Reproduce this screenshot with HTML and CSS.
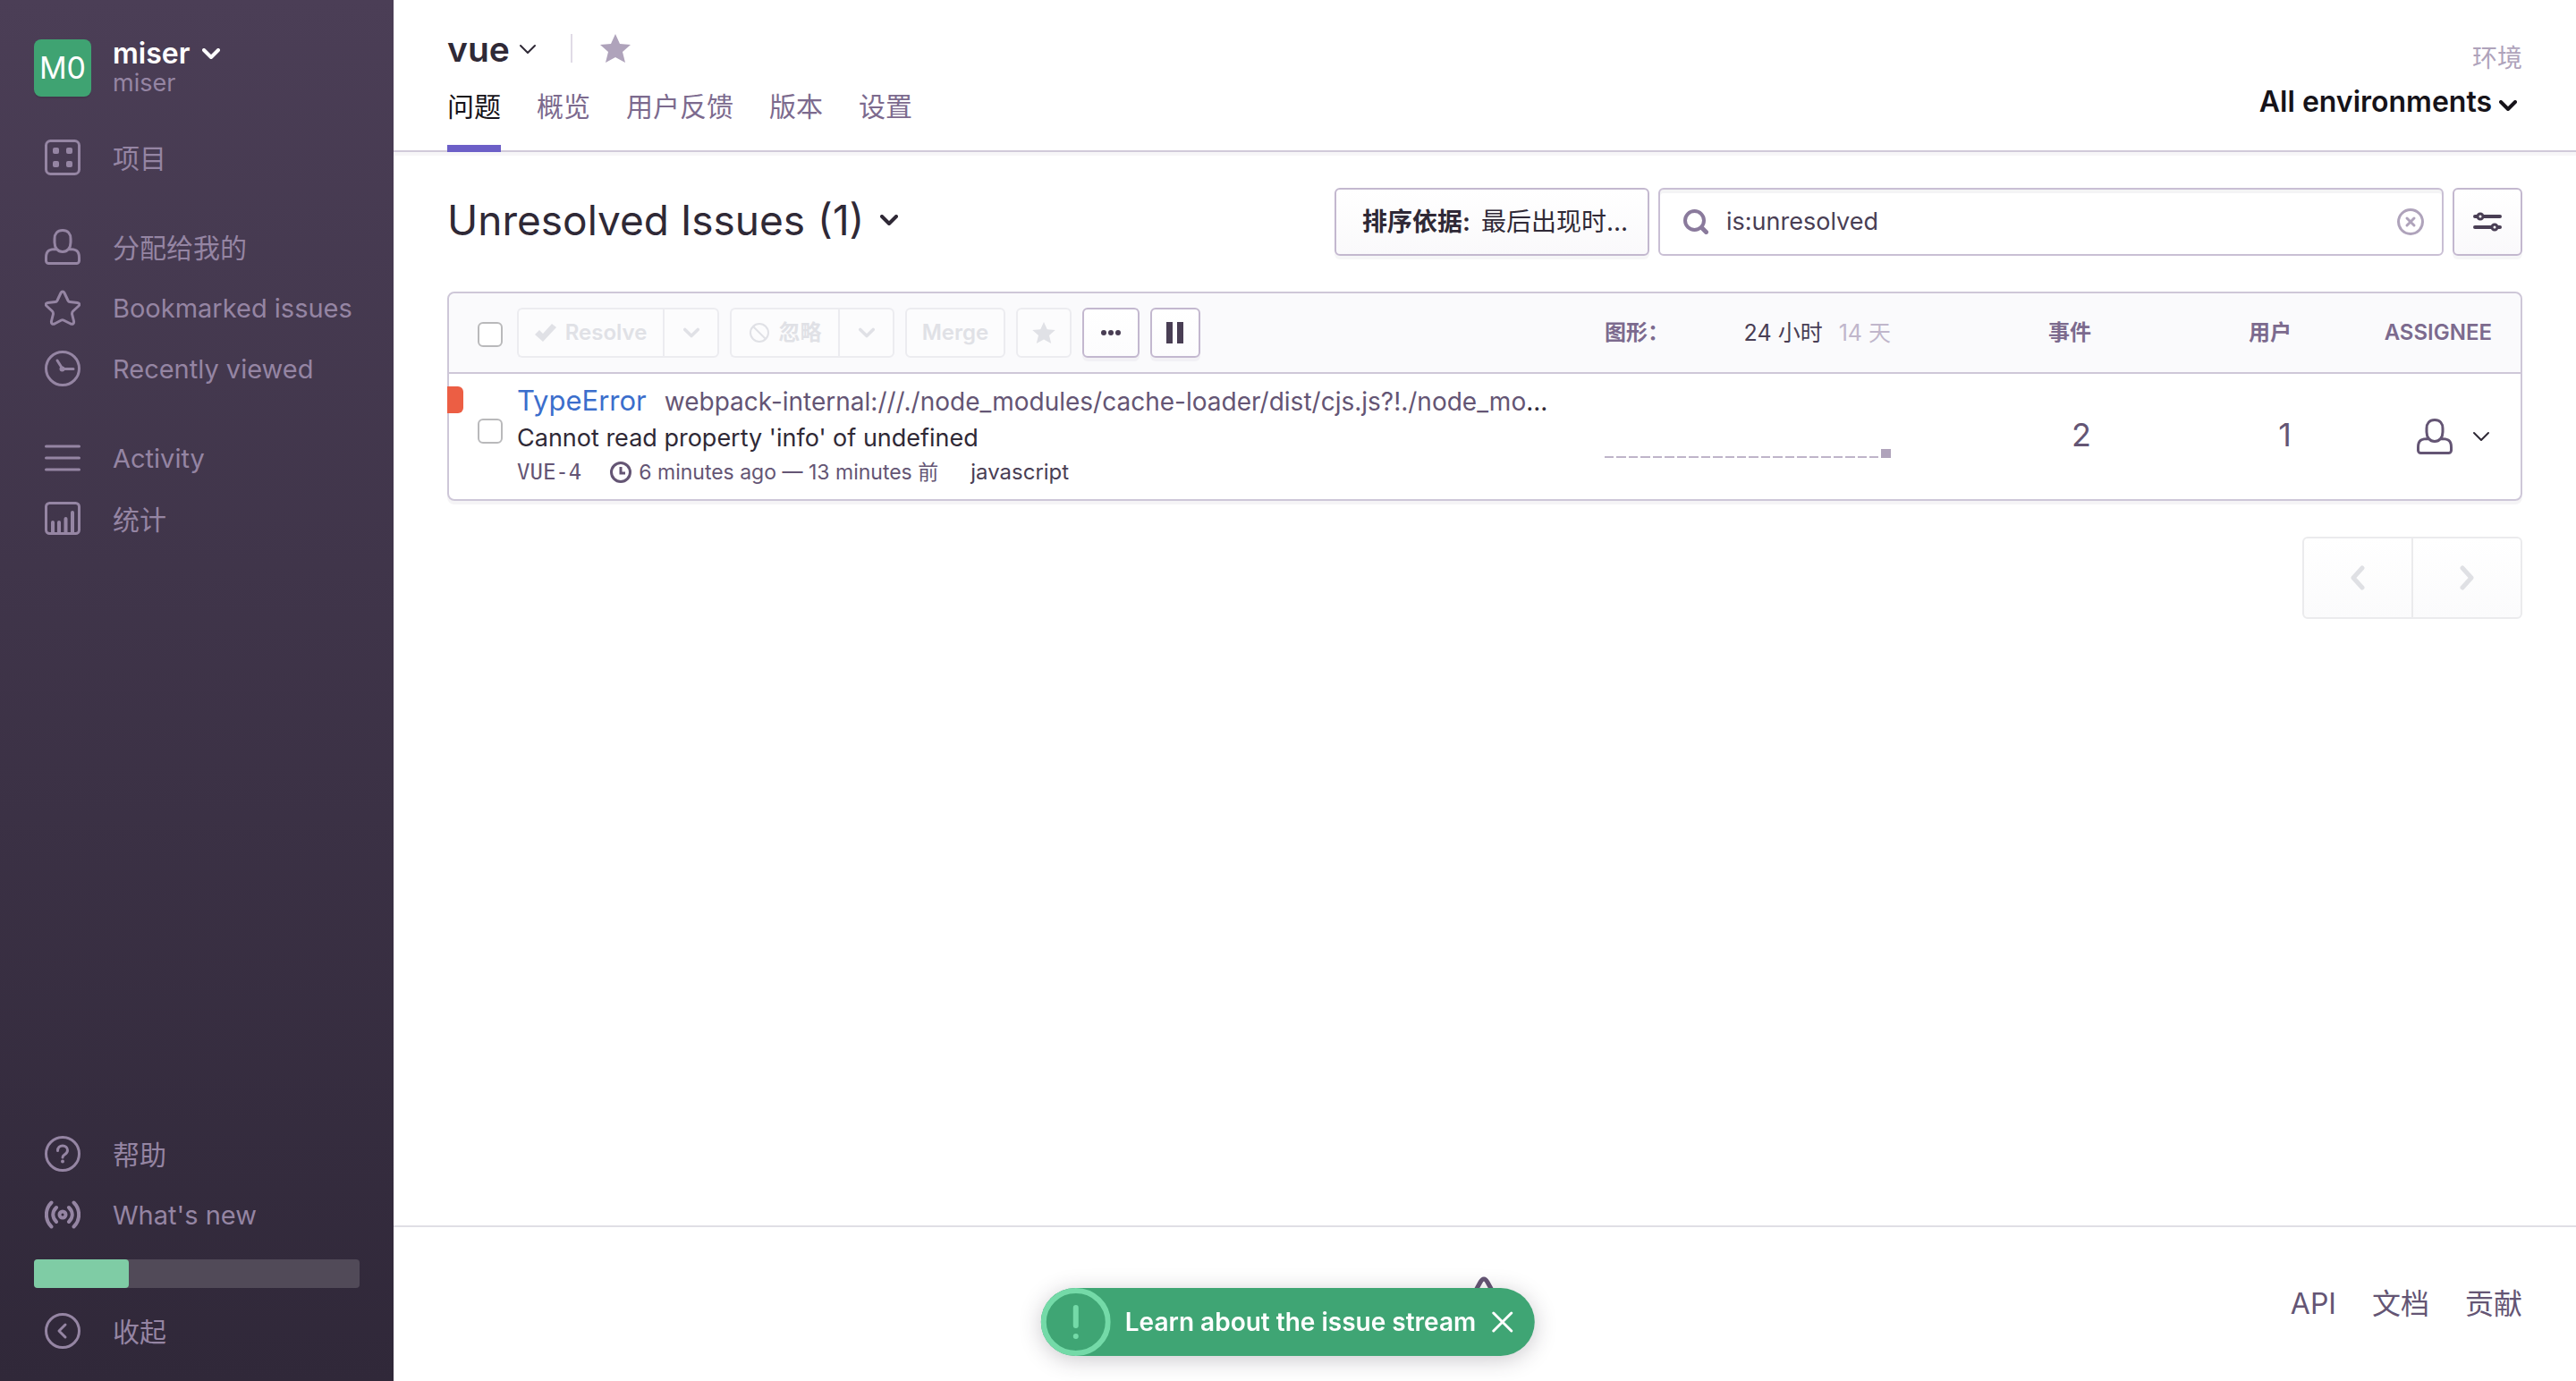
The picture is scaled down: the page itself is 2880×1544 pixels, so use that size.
FILE: index.html
```html
<!DOCTYPE html>
<html lang="zh-CN">
<head>
<meta charset="utf-8">
<title>vue - Unresolved Issues</title>
<link rel="stylesheet" href="styles.css">
</head>
<body>
<svg class="sprite" aria-hidden="true">
  <symbol id="chevron" viewBox="0 0 20 12"><path d="M2 2l8 8 8-8" fill="none" stroke="currentColor" stroke-linecap="round" stroke-linejoin="round"/></symbol>
  <symbol id="user" viewBox="0 0 40 40"><path d="M14 22.500C5 22.500 1.500 24 1.500 32v3.500a3 3 0 0 0 3 3h31a3 3 0 0 0 3-3V32c0-8-3.500-9.500-12.500-9.500M20 1.500c-6 0-9 4-9 9.500v4c0 6 3.500 10.500 9 10.500s9-4.500 9-10.500v-4c0-5.500-3-9.500-9-9.500z" fill="none" stroke="currentColor" stroke-width="3" stroke-linejoin="round"/></symbol>
  <symbol id="star-solid" viewBox="0 0 34 32"><path d="M17 0l5 11 12 1-9 8 3 12-11-6-11 6 3-12-9-8 12-1z" fill="currentColor"/></symbol>
</svg>
<div class="app">
  <aside class="sidebar">
    <button class="org" type="button">
      <span class="avatar">M0</span>
      <span class="org-text">
        <span class="org-name">miser <svg class="org-caret"><use href="#chevron"/></svg></span>
        <span class="org-sub">miser</span>
      </span>
    </button>
    <nav class="nav">
      <ul class="nav-group">
        <li><a class="zh" href="#projects"><svg viewBox="0 0 40 40"><rect x="1.500" y="1.500" width="37" height="37" rx="5" fill="none" stroke="currentColor" stroke-width="3"/><g fill="currentColor"><rect x="9" y="9" width="7" height="7" rx="2"/><rect x="24" y="9" width="7" height="7" rx="2"/><rect x="9" y="24" width="7" height="7" rx="2"/><rect x="24" y="24" width="7" height="7" rx="2"/></g></svg><span>项目</span></a></li>
      </ul>
      <ul class="nav-group">
        <li><a class="zh" href="#assigned"><svg viewBox="0 0 40 40"><use href="#user"/></svg><span>分配给我的</span></a></li>
        <li><a href="#bookmarks"><svg viewBox="0 0 40 40"><path d="M18 3.500c1-2 3-2 4 0l4 8.500c.500 1 1 1.500 2 1.500l8.500 1c2.500.500 3 2 1.500 3.500L31.500 24c-1 1-1 2-1 3l2 8c.500 2.500-1 4-3.500 3L21 34c-1-.500-1.500-.500-2.500 0L11 38c-2.500 1-4-.500-3.500-3l2-8c0-1 0-2-1-3L2 18c-1.500-1.500-1-3 1.500-3.500l8.500-1c1 0 1.500-.500 2-1.500z" fill="none" stroke="currentColor" stroke-width="3" stroke-linejoin="round"/></svg><span>Bookmarked issues</span></a></li>
        <li><a href="#recent"><svg viewBox="0 0 40 40"><circle cx="20" cy="20" r="18.500" fill="none" stroke="currentColor" stroke-width="3"/><path d="M14 11l6 9.500h12" fill="none" stroke="currentColor" stroke-width="3" stroke-linecap="round"/><circle cx="19.500" cy="20.500" r="3" fill="currentColor"/></svg><span>Recently viewed</span></a></li>
      </ul>
      <ul class="nav-group">
        <li><a href="#activity"><svg viewBox="0 0 40 40"><path d="M1.500 7h37M1.500 20h37M1.500 33h37" fill="none" stroke="currentColor" stroke-width="3" stroke-linecap="round"/></svg><span>Activity</span></a></li>
        <li><a class="zh" href="#stats"><svg viewBox="0 0 40 40"><rect x="1.500" y="2.500" width="37" height="34" rx="4" fill="none" stroke="currentColor" stroke-width="3"/><path d="M9 35V24M16 35V24M23.500 35V20M31 35V13" fill="none" stroke="currentColor" stroke-width="4" stroke-linecap="round"/></svg><span>统计</span></a></li>
      </ul>
    </nav>
    <div class="sidebar-bottom">
      <ul class="nav-group">
        <li><a class="zh" href="#help"><svg viewBox="0 0 40 40"><circle cx="20" cy="20" r="18.500" fill="none" stroke="currentColor" stroke-width="3"/><path d="M14.500 16.500c0-3.500 2.500-5.500 5.500-5.500s5.500 2 5.500 5-2 4-3.500 5-2 1.500-2 3" fill="none" stroke="currentColor" stroke-width="3" stroke-linecap="round"/><circle cx="20" cy="28.500" r="2" fill="currentColor"/></svg><span>帮助</span></a></li>
        <li><a href="#whats-new"><svg viewBox="0 0 40 40"><path d="M7.500 6.500C0 14 0 26 7.500 33.500M32.500 6.500C40 14 40 26 32.500 33.500M13 12c-5 5-5 11 0 16M27 12c5 5 5 11 0 16" fill="none" stroke="currentColor" stroke-width="4" stroke-linecap="round"/><circle cx="20" cy="20" r="3.500" fill="none" stroke="currentColor" stroke-width="4"/></svg><span>What's new</span></a></li>
      </ul>
      <div class="progress"><div class="progress-fill"></div></div>
      <ul class="nav-group">
        <li><a class="zh" href="#collapse"><svg viewBox="0 0 40 40"><circle cx="20" cy="20" r="18.500" fill="none" stroke="currentColor" stroke-width="3"/><path d="M23 13l-7 7 7 7" fill="none" stroke="currentColor" stroke-width="3" stroke-linecap="round" stroke-linejoin="round"/></svg><span>收起</span></a></li>
      </ul>
    </div>
  </aside>

  <div class="content">
    <header class="page-header">
      <div class="project">
        <div class="project-title">
          <button class="project-name" type="button">vue <svg class="caret-thin"><use href="#chevron"/></svg></button>
          <button class="bookmark" type="button" aria-label="Bookmark"><svg><use href="#star-solid"/></svg></button>
        </div>
        <nav class="tabs">
          <a class="active" href="#issues">问题</a>
          <a href="#overview">概览</a>
          <a href="#feedback">用户反馈</a>
          <a href="#releases">版本</a>
          <a href="#settings">设置</a>
        </nav>
      </div>
      <div class="environment">
        <span class="environment-label">环境</span>
        <button type="button">All environments<svg><use href="#chevron"/></svg></button>
      </div>
    </header>

    <main class="main">
      <div class="filters">
        <h1 class="title">Unresolved Issues <span>(1)</span><svg><use href="#chevron"/></svg></h1>
        <button class="btn sort" type="button"><strong>排序依据:</strong><span>最后出现时...</span></button>
        <div class="search">
          <svg class="search-icon" viewBox="0 0 28 28"><circle cx="12.500" cy="12.500" r="10.500" fill="none" stroke="currentColor" stroke-width="4"/><path d="M20.500 20.500l5 5" stroke="currentColor" stroke-width="5" stroke-linecap="round"/></svg>
          <input type="text" value="is:unresolved" aria-label="Search">
          <button class="clear" type="button" aria-label="Clear"><svg viewBox="0 0 30 30"><circle cx="15" cy="15" r="13.500" fill="none" stroke="currentColor" stroke-width="3"/><path d="M11 11l8 8M19 11l-8 8" stroke="currentColor" stroke-width="3" stroke-linecap="round"/></svg></button>
        </div>
        <button class="btn tune" type="button" aria-label="Filters"><svg viewBox="0 0 32 22"><path d="M2 5h28M2 17h28" stroke="currentColor" stroke-width="4" stroke-linecap="round"/><circle cx="8" cy="5" r="3" fill="#fff" stroke="currentColor" stroke-width="3"/><circle cx="24" cy="17" r="3" fill="#fff" stroke="currentColor" stroke-width="3"/></svg></button>
      </div>

      <div class="panel">
        <table class="issues">
          <colgroup><col class="c-check"><col><col class="c-graph"><col class="c-count"><col class="c-count"><col class="c-assignee"></colgroup>
          <thead>
            <tr>
              <th class="check"><input type="checkbox" aria-label="Select all"></th>
              <th class="summary">
                <div class="actions">
                  <div class="group">
                    <button class="small resolve" type="button" disabled><svg class="i-check" viewBox="0 0 24 20"><path d="M0 12l5-5 4 4L19 0l5 4L9 20z" fill="currentColor"/></svg>Resolve</button>
                    <button class="small drop" type="button" disabled aria-label="Resolve options"><svg class="i-drop"><use href="#chevron"/></svg></button>
                  </div>
                  <div class="group">
                    <button class="small ignore" type="button" disabled><svg class="i-ban" viewBox="0 0 24 24"><circle cx="12" cy="12" r="10" fill="none" stroke="currentColor" stroke-width="2"/><path d="M5 5l14 14" stroke="currentColor" stroke-width="2"/></svg>忽略</button>
                    <button class="small drop" type="button" disabled aria-label="Ignore options"><svg class="i-drop"><use href="#chevron"/></svg></button>
                  </div>
                  <button class="small merge" type="button" disabled>Merge</button>
                  <button class="small fav" type="button" disabled aria-label="Bookmark"><svg class="i-star"><use href="#star-solid"/></svg></button>
                  <button class="small more" type="button" aria-label="More"><svg class="i-more" viewBox="0 0 24 8"><g fill="currentColor"><circle cx="4" cy="4" r="3"/><circle cx="12" cy="4" r="3"/><circle cx="20" cy="4" r="3"/></g></svg></button>
                  <button class="small pause" type="button" aria-label="Pause"><svg class="i-pause" viewBox="0 0 20 24"><path d="M0 0h7v24H0zM12 0h7v24h-7z" fill="currentColor"/></svg></button>
                </div>
              </th>
              <th class="label"><div class="graph-head"><span>图形：</span><span class="ranges"><a class="on" href="#24h">24 小时</a><a href="#14d">14 天</a></span></div></th>
              <th class="label num">事件</th>
              <th class="label num">用户</th>
              <th class="label num">ASSIGNEE</th>
            </tr>
          </thead>
          <tbody>
            <tr>
              <td class="check"><span class="level"></span><input type="checkbox" aria-label="Select issue"></td>
              <td class="summary">
                <div class="issue-title"><a href="#issue">TypeError</a><span>webpack-internal:///./node_modules/cache-loader/dist/cjs.js?!./node_mo</span>...</div>
                <div class="issue-message">Cannot read property 'info' of undefined</div>
                <div class="issue-meta"><span class="short-id">VUE-4</span><span class="time"><svg viewBox="0 0 24 24"><circle cx="12" cy="12" r="10.500" fill="none" stroke="currentColor" stroke-width="3"/><path d="M12 6v7h5" fill="none" stroke="currentColor" stroke-width="3"/></svg>6 minutes ago — 13 minutes 前</span><a href="#logger">javascript</a></div>
              </td>
              <td><div class="bars"><i></i><i></i><i></i><i></i><i></i><i></i><i></i><i></i><i></i><i></i><i></i><i></i><i></i><i></i><i></i><i></i><i></i><i></i><i></i><i></i><i></i><i></i><i></i><i class="hit"></i></div></td>
              <td class="num">2</td>
              <td class="num">1</td>
              <td><button class="assign" type="button" aria-label="Assign"><svg class="assign-user"><use href="#user"/></svg><svg class="caret-thin"><use href="#chevron"/></svg></button></td>
            </tr>
          </tbody>
        </table>
      </div>

      <div class="pagination">
        <button type="button" disabled aria-label="Previous"><svg viewBox="0 0 16 28"><path d="M13 3L3 14l10 11" fill="none" stroke="currentColor" stroke-width="5" stroke-linecap="round" stroke-linejoin="round"/></svg></button>
        <button type="button" disabled aria-label="Next"><svg viewBox="0 0 16 28"><path d="M3 3l10 11L3 25" fill="none" stroke="currentColor" stroke-width="5" stroke-linecap="round" stroke-linejoin="round"/></svg></button>
      </div>
    </main>

    <footer class="footer">
      <svg class="logo" viewBox="0 0 60 62"><path d="M5 52c-3 0-3-2-2-4L26 6.500q4-7 8 0L57 48c1 2 1 4-2 4H42C42 38 34 28 22 22M13 38c5 3 8 7 9 14H5" fill="none" stroke="currentColor" stroke-width="5" stroke-linejoin="round"/></svg>
      <nav><a href="#api">API</a><a href="#docs">文档</a><a href="#contribute">贡献</a></nav>
    </footer>
  </div>
</div>

<div class="guide">
  <svg class="guide-cue" viewBox="0 0 78 76"><ellipse cx="39" cy="38" rx="36" ry="35" fill="none" stroke="currentColor" stroke-width="6"/><path d="M39 22v20" stroke="currentColor" stroke-width="6" stroke-linecap="round"/><circle cx="39" cy="54" r="3" fill="currentColor"/></svg>
  <span>Learn about the issue stream</span>
  <button type="button" aria-label="Close"><svg viewBox="0 0 24 24"><path d="M2 2l20 20M22 2L2 22" stroke="currentColor" stroke-width="3" stroke-linecap="round"/></svg></button>
</div>
</body>
</html>
```
FILE: styles.css
```css
* { box-sizing: border-box; }
body {
  margin: 0;
  background: #fff;
  color: #2f2936;
  font: 28px/40px Inter, "Noto Sans CJK SC", sans-serif;
}
a { color: inherit; text-decoration: none; }
button {
  margin: 0;
  padding: 0;
  border: 0;
  background: none;
  color: inherit;
  font: inherit;
  text-align: left;
}
ul { list-style: none; margin: 0; padding: 0; }
svg { display: block; flex: none; }
.sprite { position: absolute; width: 0; height: 0; }

.app { display: flex; min-height: 100vh; }

/* Sidebar */
.sidebar {
  display: flex;
  flex-direction: column;
  flex: none;
  width: 440px;
  padding: 40px 38px 22px;
  background: linear-gradient(#4b3e56, #302839);
  color: #9585a3;
}
.org { display: flex; gap: 24px; padding-top: 4px; }
.avatar {
  width: 64px;
  height: 64px;
  border-radius: 8px;
  background: #3fa372;
  color: #fff;
  font-size: 34px;
  line-height: 64px;
  text-align: center;
  box-shadow: 0 2px 0 rgba(0, 0, 0, .08);
}
.org-text { display: flex; flex-direction: column; }
.org-name {
  display: flex;
  align-items: center;
  gap: 14px;
  color: #fff;
  font-size: 32px;
  font-weight: 600;
  line-height: 32px;
}
.org-caret { width: 20px; height: 12px; stroke-width: 4; }
.org-sub { font-size: 27px; line-height: 34px; }
.nav { display: flex; flex-direction: column; gap: 32px; margin-top: 32px; }
.nav-group a {
  display: flex;
  align-items: center;
  gap: 36px;
  height: 68px;
  padding-left: 12px;
  font-size: 29px;
  white-space: nowrap;
}
.nav-group .zh { font-size: 30px; }
.nav-group span { padding-top: 2px; }
.nav-group svg { width: 40px; height: 40px; }
.sidebar-bottom { margin-top: auto; }
.progress {
  height: 32px;
  margin: 16px 0 14px;
  border-radius: 4px;
  background: #514a58;
}
.progress-fill { width: 29%; height: 100%; border-radius: 4px; background: #7fcca5; }

/* Project header */
.content { display: flex; flex-direction: column; flex: 1; min-width: 0; }
.page-header {
  display: flex;
  justify-content: space-between;
  padding: 34px 60px 0;
  border-bottom: 2px solid #d1cad9;
  box-shadow: 0 4px 0 #f7f6f8;
}
.project-title { display: flex; align-items: center; height: 40px; }
.project-name { display: flex; align-items: center; gap: 10px; padding-top: 2px; font-size: 39px; font-weight: 600; line-height: 40px; }
.caret-thin { width: 20px; height: 12px; stroke-width: 2; }
.bookmark { margin-left: 38px; padding-left: 31px; border-left: 2px solid #e0dbe6; color: #afa3bb; }
.bookmark svg { width: 34px; height: 32px; }
.tabs { display: flex; gap: 40px; margin: 16px 0 -2px; color: #7c6a8e; font-size: 30px; }
.tabs a { height: 80px; padding-top: 9px; line-height: 40px; }
.tabs .active { border-bottom: 8px solid #6c5fc7; color: #161319; }
.environment { display: flex; flex-direction: column; align-items: flex-end; padding-top: 8px; color: #afa3bb; }
.environment-label { line-height: 46px; }
.environment button {
  display: flex;
  align-items: center;
  gap: 8px;
  padding-right: 6px;
  color: #161319;
  font-size: 32px;
  font-weight: 600;
  line-height: 52px;
}
.environment svg { width: 20px; height: 12px; margin-top: 8px; stroke-width: 4; }

/* Filter row */
.main { flex: 1; padding: 40px 60px; }
.filters { display: flex; align-items: stretch; height: 76px; }
.title { display: flex; flex: 1; align-items: center; gap: 14px; margin: 0; padding-bottom: 4px; font-size: 46px; font-weight: 400; line-height: 72px; white-space: nowrap; }
.title svg { width: 20px; height: 12px; margin-left: 4px; stroke-width: 4; }
.btn {
  display: flex;
  align-items: center;
  border: 2px solid #c3b8cf;
  border-radius: 6px;
  background: linear-gradient(#fff, #faf9fb);
  box-shadow: 0 4px 0 #f6f6f7;
  white-space: nowrap;
}
.sort { gap: 12px; width: 352px; padding-left: 29px; }
.sort strong { font-weight: 600; }
.search {
  display: flex;
  align-items: center;
  width: 878px;
  margin: 0 10px;
  padding: 0 20px 0 26px;
  border: 2px solid #c9bfd4;
  border-radius: 6px;
  box-shadow: inset 0 4px 0 #f4f4f5;
}
.search-icon { width: 28px; height: 28px; color: #8a7a9c; }
.search input { flex: 1; min-width: 0; margin-left: 20px; padding: 0; border: 0; outline: 0; background: none; color: #493e54; font: inherit; font-size: 27px; }
.clear { color: #afa3bb; }
.clear svg { width: 30px; height: 30px; }
.tune { justify-content: center; width: 78px; color: #493e54; }
.tune svg { width: 32px; height: 22px; }

/* Issue list */
.panel { margin-top: 40px; border: 2px solid #cec7d8; border-radius: 8px; box-shadow: 0 4px 0 #f5f4f6; }
.issues { width: 100%; border-collapse: separate; border-spacing: 0; table-layout: fixed; }
.issues th, .issues td { padding: 0; text-align: left; }
.c-check { width: 76px; }
.c-graph { width: 320px; }
.c-count { width: 224px; }
.c-assignee { width: 256px; }
.issues th {
  height: 90px;
  border-bottom: 2px solid #cec7d8;
  background: #fafafc;
  color: #7c6a8e;
  font-size: 24px;
  font-weight: 600;
}
.issues th:first-child { padding-top: 4px; border-top-left-radius: 8px; }
.issues .label:last-child { padding-right: 32px; border-top-right-radius: 8px; }
.issues .num { text-align: right; }
.issues td:last-child { padding-right: 34px; }
.check { position: relative; }
.issues td.check { padding-bottom: 12px; }
.check input {
  display: block;
  appearance: none;
  width: 28px;
  height: 28px;
  margin: 0 0 0 32px;
  border: 2px solid #b9b9bb;
  border-radius: 6px;
  background: #fff;
}
.level { position: absolute; top: 14px; left: -2px; width: 18px; height: 30px; border-radius: 0 6px 6px 0; background: #ec5e44; }
.actions { display: flex; gap: 12px; }
.group { display: flex; }
.group .small:first-child { border-right: 0; border-radius: 6px 0 0 6px; }
.group .small:last-child { border-radius: 0 6px 6px 0; }
.small {
  display: flex;
  align-items: center;
  justify-content: center;
  gap: 10px;
  height: 56px;
  border: 2px solid #c3b8cf;
  border-radius: 6px;
  background: linear-gradient(#fff, #fcfcfd);
  box-shadow: 0 4px 0 #f2f1f5;
  color: #493e54;
}
.small:disabled { border-color: #ececf0; background: #fcfcfd; box-shadow: none; color: #e0e1e6; }
.resolve { width: 163px; }
.ignore { width: 121px; }
.drop { width: 63px; }
.merge { width: 112px; }
.fav { width: 62px; }
.more { width: 64px; }
.pause { width: 56px; }
.i-check { width: 24px; height: 20px; }
.i-drop { width: 18px; height: 12px; stroke-width: 4; }
.i-ban { width: 24px; height: 24px; }
.i-star { width: 26px; height: 24px; }
.i-more { width: 24px; height: 8px; }
.i-pause { width: 20px; height: 24px; }
.graph-head { display: flex; justify-content: space-between; }
.ranges { display: flex; gap: 18px; color: #c0b6cb; font-size: 25px; font-weight: 400; }
.ranges .on { color: #493e54; }
.issues td { height: 140px; }
.issues td.num { padding-bottom: 4px; color: #645574; font-size: 36px; }
.issues td.summary { padding-bottom: 2px; }
.issue-title { display: flex; align-items: baseline; height: 42px; font-size: 28px; white-space: nowrap; }
.issue-title a { margin-right: 20px; color: #3b6ecc; font-size: 31px; }
.issue-title span { color: #645574; font-size: 28px; }
.issue-message { font-size: 27px; }
.issue-meta { display: flex; align-items: center; height: 36px; color: #645574; font-size: 23px; white-space: nowrap; }
.short-id { margin-right: 32px; font-family: "DejaVu Sans Mono", monospace; font-size: 24px; }
.time { display: flex; align-items: center; gap: 8px; margin-right: 36px; }
.time svg { width: 24px; height: 24px; }
.issue-meta a { color: #493e54; font-size: 24px; }
.bars { display: flex; align-items: flex-end; gap: 3px; height: 48px; }
.bars i { flex: 1; height: 2px; background: #bfb5c9; }
.bars .hit { height: 10px; background: #afa3bb; }
.assign { display: flex; align-items: center; gap: 22px; margin-left: auto; }
.assign-user { width: 40px; height: 40px; color: #645574; }

.pagination { display: flex; justify-content: flex-end; margin-top: 40px; }
.pagination button {
  display: flex;
  align-items: center;
  justify-content: center;
  width: 124px;
  height: 92px;
  border: 2px solid #ebebed;
  border-radius: 6px 0 0 6px;
  background: linear-gradient(#fff, #fbfbfc);
  color: #dfe0e4;
}
.pagination button + button { margin-left: -2px; border-radius: 0 6px 6px 0; }
.pagination svg { width: 16px; height: 28px; }

/* Footer */
.footer {
  display: flex;
  align-items: center;
  justify-content: space-between;
  height: 174px;
  padding: 0 60px;
  border-top: 2px solid #e0dfe5;
  color: #645574;
}
.footer::before { content: ""; width: 258px; }
.logo { width: 60px; height: 62px; }
.footer nav { display: flex; gap: 40px; font-size: 32px; }

/* Guide pill */
.guide {
  position: fixed;
  bottom: 28px;
  left: 50%;
  display: flex;
  align-items: center;
  height: 76px;
  padding-right: 24px;
  border-radius: 38px;
  background: #3fa574;
  box-shadow: 0 4px 24px rgba(47, 41, 54, .25);
  color: #fff;
  font-weight: 600;
  white-space: nowrap;
  transform: translateX(-50%);
}
.guide-cue { width: 78px; height: 76px; margin-right: 16px; color: #74daa8; }
.guide button { margin-left: 18px; }
.guide button svg { width: 24px; height: 24px; }
```
